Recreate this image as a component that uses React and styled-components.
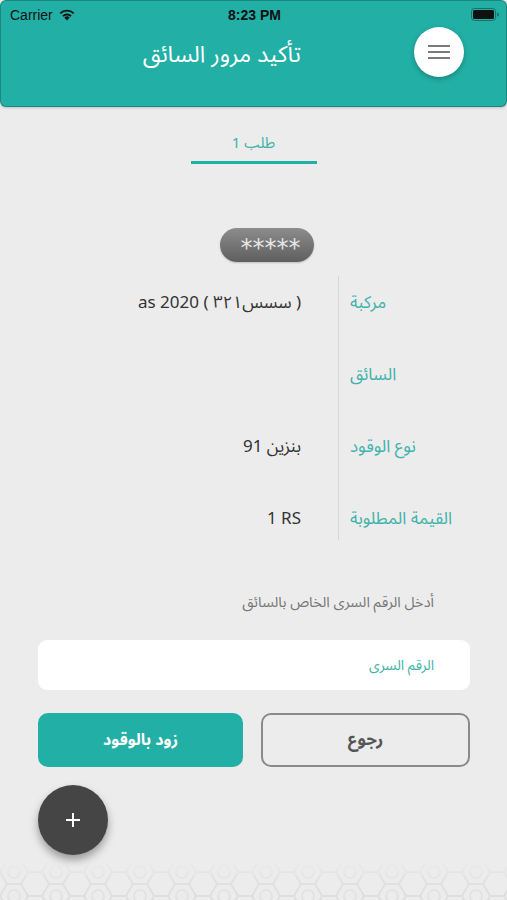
import React from 'react';
import styled, {createGlobalStyle} from 'styled-components';

const COLORS = {
  teal: '#22afa5',
  label: '#3fb3aa',
  page: '#ececec',
  text: '#333',
  muted: '#777'
};

const FONT = `"Noto Sans Arabic", "Noto Naskh Arabic", "DejaVu Sans", sans-serif`;

const GlobalStyle = createGlobalStyle`
  body {
    margin: 0;
    background: ${COLORS.page};
    font-family: ${FONT};
  }
`;

const Page = styled.div`
  direction: rtl;
  min-height: 900px;
  width: 507px;
  display: flex;
  flex-direction: column;
  align-items: center;
  background: ${COLORS.page};
  overflow: hidden;
`;

const Header = styled.header`
  box-sizing: border-box;
  align-self: stretch;
  height: 107px;
  background: ${COLORS.teal};
  border: 1px solid rgba(0, 0, 0, 0.22);
  border-radius: 6px;
  box-shadow: 0 1px 3px rgba(0, 0, 0, 0.18);
  display: flex;
  flex-direction: column;
`;

const StatusBar = styled.div`
  direction: ltr;
  height: 27px;
  display: grid;
  grid-template-columns: 1fr auto 1fr;
  align-items: center;
  padding: 0 7px 0 9px;
  font-family: "Liberation Sans", Arial, sans-serif;
  color: #111;
`;

const Carrier = styled.div`
  display: flex;
  align-items: center;
  gap: 5px;
  font-size: 14px;
`;

const Clock = styled.div`
  font-size: 14px;
  font-weight: bold;
`;

const Battery = styled.div`
  justify-self: end;
  display: flex;
  align-items: center;
`;

const TitleRow = styled.div`
  flex: 1;
  display: flex;
  align-items: flex-start;
  padding-right: 42px;
  gap: 113px;
`;

const MenuButton = styled.button`
  width: 50px;
  height: 50px;
  margin-top: -1px;
  border: none;
  border-radius: 50%;
  background: #fff;
  box-shadow: 0 2px 5px rgba(0, 0, 0, 0.25);
  display: flex;
  flex-direction: column;
  align-items: center;
  justify-content: center;
  gap: 4px;
  padding: 0;
`;

const MenuLine = styled.span`
  width: 22px;
  height: 2px;
  background: #7a7a7a;
`;

const Title = styled.h1`
  margin: 11px 0 0;
  font-size: 23px;
  font-weight: normal;
  color: #fff;
  line-height: 32px;
`;

const Tab = styled.div`
  margin-top: 26px;
  width: 126px;
  text-align: center;
  font-size: 15px;
  line-height: 20px;
  padding-bottom: 8px;
  color: ${COLORS.label};
  border-bottom: 3px solid ${COLORS.teal};
`;

const CodePill = styled.div`
  margin-top: 64px;
  margin-left: 26px;
  width: 94px;
  height: 34px;
  box-sizing: border-box;
  border-radius: 17px;
  background: linear-gradient(#8c8c8c, #5f5f5f);
  box-shadow: 0 1px 2px rgba(0, 0, 0, 0.2);
  color: #e6e6e6;
  font-family: "DejaVu Sans", sans-serif;
  font-size: 24px;
  display: flex;
  align-items: center;
  justify-content: center;
  padding: 6px 0 0 8px;
`;

const Details = styled.div`
  margin-top: 5px;
  align-self: stretch;
  display: flex;
`;

const Column = styled.div`
  display: flex;
  flex-direction: column;
  width: ${p => p.$width || 'auto'};
  flex: ${p => (p.$grow ? 1 : 'none')};
`;

const Divider = styled.div`
  width: 1px;
  margin: 9px 0 15px;
  background: #d6d6d6;
`;

const Cell = styled.div`
  height: 72px;
  display: flex;
  align-items: center;
`;

const Label = styled(Cell)`
  justify-content: flex-end;
  padding-left: 11px;
  font-size: 17px;
  color: ${COLORS.label};
`;

const Value = styled(Cell)`
  justify-content: flex-start;
  padding-right: 37px;
  font-size: 17px;
  color: ${COLORS.text};
`;

const Hint = styled.div`
  margin-top: 39px;
  align-self: stretch;
  padding-right: 73px;
  font-size: 14.5px;
  line-height: 18px;
  color: ${COLORS.muted};
`;

const Form = styled.div`
  align-self: stretch;
  padding: 0 37px 0 38px;
  display: flex;
  flex-direction: column;
`;

const PinInput = styled.input`
  margin-top: 28px;
  height: 50px;
  box-sizing: border-box;
  border: none;
  border-radius: 9px;
  background: #fff;
  padding: 0 36px 0 16px;
  font-family: ${FONT};
  font-size: 14px;
  direction: rtl;
  outline: none;

  &::placeholder {
    color: ${COLORS.label};
  }
`;

const Actions = styled.div`
  margin-top: 23px;
  display: flex;
  gap: 18px;
`;

const Button = styled.button`
  flex: 1;
  height: 54px;
  box-sizing: border-box;
  border-radius: 10px;
  font-family: ${FONT};
  font-size: ${p => (p.$primary ? '16px' : '17px')};
  font-weight: bold;
  border: ${p => (p.$primary ? 'none' : '2px solid #8a8a8a')};
  background: ${p => (p.$primary ? COLORS.teal : 'transparent')};
  color: ${p => (p.$primary ? '#fff' : '#555')};
`;

const Fab = styled.button`
  margin-top: 18px;
  align-self: flex-end;
  width: 70px;
  height: 70px;
  border: none;
  border-radius: 50%;
  background: #454545;
  box-shadow: 0 5px 9px rgba(0, 0, 0, 0.35);
  display: flex;
  align-items: center;
  justify-content: center;
  padding: 0;
`;

const Pattern = styled.svg`
  margin-top: auto;
  display: block;
  width: 507px;
  height: 40px;
`;

const WifiIcon = () => (
  <svg width="18" height="13" viewBox="0 0 18 13">
    <path d="M9 12.5 L6.3 9.6 A3.8 3.8 0 0 1 11.7 9.6 Z" fill="#111" />
    <path d="M4.3 7.5 A6.7 6.7 0 0 1 13.7 7.5 L12.4 8.8 A4.9 4.9 0 0 0 5.6 8.8 Z" fill="#111" />
    <path d="M1.6 4.8 A10.5 10.5 0 0 1 16.4 4.8 L15.1 6.1 A8.7 8.7 0 0 0 2.9 6.1 Z" fill="#111" />
  </svg>
);

const BatteryIcon = () => (
  <svg width="28" height="13" viewBox="0 0 28 13">
    <rect x="0.5" y="0.5" width="24" height="12" rx="3" fill="none" stroke="#1e6f69" />
    <rect x="2" y="2" width="21" height="9" rx="1.5" fill="#111" />
    <path d="M26 4.5 a2 2 0 0 1 0 4 Z" fill="#1e6f69" />
  </svg>
);

const PlusIcon = () => (
  <svg width="16" height="16" viewBox="0 0 16 16">
    <path d="M8 1 V15 M1 8 H15" stroke="#fff" strokeWidth="2" />
  </svg>
);

const Lattice = () => (
  <Pattern viewBox="0 0 507 40">
    <defs>
      <pattern id="hex" width="42" height="24" patternUnits="userSpaceOnUse">
        <path
          d="M0 12 L7 0 H21 L28 12 L21 24 H7 Z M28 12 H42"
          fill="none"
          stroke="#dedede"
          strokeWidth="2"
        />
        <circle cx="14" cy="12" r="6" fill="none" stroke="#e2e2e2" strokeWidth="2" />
      </pattern>
      <linearGradient id="fade" x1="0" y1="0" x2="0" y2="1">
        <stop offset="0" stopColor="#fff" stopOpacity="0" />
        <stop offset="0.5" stopColor="#fff" stopOpacity="0.8" />
        <stop offset="1" stopColor="#fff" stopOpacity="1" />
      </linearGradient>
      <mask id="fadeMask">
        <rect width="507" height="40" fill="url(#fade)" />
      </mask>
    </defs>
    <rect width="507" height="40" fill="url(#hex)" mask="url(#fadeMask)" />
  </Pattern>
);

const DETAILS = [
  {label: 'مركبة', value: '( سسس٣٢١ ) as 2020'},
  {label: 'السائق', value: ''},
  {label: 'نوع الوقود', value: 'بنزين 91'},
  {label: 'القيمة المطلوبة', value: '1 RS'}
];

const App = () => (
  <>
    <GlobalStyle />
    <Page>
      <Header>
        <StatusBar>
          <Carrier>
            Carrier <WifiIcon />
          </Carrier>
          <Clock>8:23 PM</Clock>
          <Battery>
            <BatteryIcon />
          </Battery>
        </StatusBar>
        <TitleRow>
          <MenuButton aria-label="menu">
            <MenuLine />
            <MenuLine />
            <MenuLine />
          </MenuButton>
          <Title>تأكيد مرور السائق</Title>
        </TitleRow>
      </Header>

      <Tab>طلب 1</Tab>

      <CodePill>*****</CodePill>

      <Details>
        <Column $width="168px">
          {DETAILS.map(d => (
            <Label key={d.label}>{d.label}</Label>
          ))}
        </Column>
        <Divider />
        <Column $grow>
          {DETAILS.map(d => (
            <Value key={d.label}>
              <bdi>{d.value}</bdi>
            </Value>
          ))}
        </Column>
      </Details>

      <Hint>أدخل الرقم السرى الخاص بالسائق</Hint>

      <Form>
        <PinInput placeholder="الرقم السرى" />
        <Actions>
          <Button>رجوع</Button>
          <Button $primary>زود بالوقود</Button>
        </Actions>
        <Fab aria-label="add">
          <PlusIcon />
        </Fab>
      </Form>

      <Lattice />
    </Page>
  </>
);

export default App;
